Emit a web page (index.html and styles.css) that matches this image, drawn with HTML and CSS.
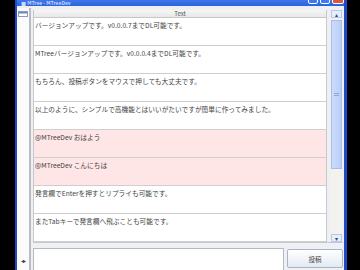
FILE: index.html
```html
<!DOCTYPE html>
<html>
  <head>
    <meta charset="UTF-8" />
    <title>MTree - MTreeDev</title>
    <link rel="stylesheet" href="styles.css">
  </head>
  <body>
    <div class="window">
      <div class="titlebar">
        <span class="title-text">■ MTree - MTreeDev</span>
        <div class="title-buttons">
          <span class="tb tb-min"></span>
          <span class="tb tb-max"></span>
          <span class="tb tb-close"></span>
        </div>
      </div>

      <div class="window-body">
        <div class="side">
          <svg class="side-icon" viewBox="0 0 10 6" width="10" height="6">
            <rect x="0.5" y="0.5" width="9" height="5" fill="#fff" stroke="#8a9ab8" />
            <rect x="1" y="1" width="8" height="1.5" fill="#6c86c0" />
          </svg>
          <span class="side-arrows">◂▸</span>
        </div>

        <div class="main">
          <div class="table-area">
            <div class="table">
              <div class="table-head">Text</div>
              <div class="row">バージョンアップです。v0.0.0.7までDL可能です。</div>
              <div class="row">MTreeバージョンアップです。v0.0.0.4までDL可能です。</div>
              <div class="row">もちろん、投稿ボタンをマウスで押しても大丈夫です。</div>
              <div class="row">以上のように、シンプルで高機能とはいいがたいですが簡単に作ってみました。</div>
              <div class="row reply">@MTreeDev おはよう</div>
              <div class="row reply">@MTreeDev こんにちは</div>
              <div class="row">発言欄でEnterを押すとリプライも可能です。</div>
              <div class="row">またTabキーで発言欄へ飛ぶことも可能です。</div>
            </div>
            <div class="scrollbar">
              <span class="sb-btn">▴</span>
              <div class="sb-track">
                <div class="sb-thumb"><span class="grip"></span></div>
              </div>
              <span class="sb-btn">▾</span>
            </div>
          </div>

          <div class="input-row">
            <input type="text" class="post-input" />
            <button class="post-button">投稿</button>
          </div>
        </div>
      </div>
    </div>
  </body>
</html>
```

FILE: styles.css
```css
:root {
  --xp-blue: #2a5fdc;
  --xp-blue-dark: #1f4cc4;
  --frame-bg: #eef0f3;
  --row-line: #cfcfcf;
  --reply-bg: #ffe6e6;
  --text: #3c3c3c;
}

* {
  margin: 0;
  padding: 0;
  box-sizing: border-box;
}

body {
  width: 360px;
  height: 270px;
  overflow: hidden;
  background-color: #000;
  font-family: "Noto Sans CJK JP", "Liberation Sans", sans-serif;
  color: var(--text);
  padding-left: 15px;
}

.window {
  width: 332px;
  height: 270px;
  display: flex;
  flex-direction: column;
  border-left: 2px solid var(--xp-blue-dark);
  border-right: 3px solid var(--xp-blue-dark);
  background-color: var(--frame-bg);
}

.titlebar {
  height: 6px;
  flex-shrink: 0;
  display: flex;
  justify-content: space-between;
  overflow: hidden;
  background: linear-gradient(#3f78ec, #2b62dd);
}

.title-text {
  font-size: 5px;
  line-height: 6px;
  margin-left: 4px;
  color: #c9d8fb;
  font-weight: bold;
}

.title-buttons {
  display: flex;
  gap: 2px;
  margin-top: -6px;
}

.tb {
  width: 10px;
  height: 10px;
  border: 1px solid #fff;
  border-radius: 2px;
  background-color: #3c7af2;
}

.tb-close {
  width: 12px;
  background-color: #e0583a;
}

.window-body {
  flex: 1;
  display: flex;
  min-height: 0;
}

.side {
  width: 14px;
  flex-shrink: 0;
  margin-top: 2px;
  background-color: #fbfbfb;
  border-right: 2px solid #b9bcc2;
  display: flex;
  flex-direction: column;
  justify-content: space-between;
  align-items: center;
  padding: 2px 0 6px;
}

.side-icon {
  display: block;
  margin-top: 1px;
}

.side-arrows {
  font-size: 6px;
  line-height: 6px;
  color: #444;
  letter-spacing: -1px;
}

.main {
  flex: 1;
  display: flex;
  flex-direction: column;
  padding: 4px 1px 0 2px;
  min-width: 0;
}

.table-area {
  display: flex;
  gap: 4px;
  height: 232px;
  flex-shrink: 0;
  border-left: 1px solid #c4c7cc;
}

.table {
  flex: 1;
  background-color: #fff;
  border-right: 1px solid #c9c9c9;
  overflow: hidden;
}

.table-head {
  height: 8px;
  font-size: 6px;
  line-height: 8px;
  text-align: center;
  color: #555;
  background: linear-gradient(#f6f6f6, #e8e8e8);
  border-bottom: 1px solid #c8c8c8;
}

.row {
  height: 28px;
  font-size: 6.7px;
  line-height: 8px;
  padding: 3px 1px 0;
  white-space: nowrap;
  color: #444;
  border-bottom: 1px solid var(--row-line);
}

.row.reply {
  background-color: var(--reply-bg);
}

.scrollbar {
  width: 11px;
  flex-shrink: 0;
  display: flex;
  flex-direction: column;
  background-color: #f3f2ee;
  margin-right: 1px;
}

.sb-btn {
  height: 8px;
  font-size: 6px;
  line-height: 8px;
  text-align: center;
  color: #3a4a78;
  background-color: #e6eefc;
  border: 1px solid #b8c8ec;
}

.sb-track {
  flex: 1;
  padding-top: 2px;
}

.sb-thumb {
  height: 149px;
  background: linear-gradient(90deg, #cddcfb, #b9cdf6);
  border: 1px solid #a8bde8;
  display: flex;
  align-items: center;
  justify-content: center;
}

.grip {
  width: 5px;
  height: 3px;
  border-top: 1px solid #8ea6d8;
  border-bottom: 1px solid #8ea6d8;
}

.input-row {
  flex: 1;
  display: flex;
  gap: 3px;
  padding-top: 5px;
  border-top: 1px solid #c4c7cc;
}

.post-input {
  flex: 1;
  border: 1px solid #b6b9be;
  border-bottom: none;
  background-color: #fff;
  min-width: 0;
}

.post-button {
  width: 56px;
  height: 19px;
  margin-top: 1px;
  font-family: "Noto Sans CJK JP", sans-serif;
  font-size: 6.5px;
  color: #444;
  border: 1px solid #a9b4c8;
  border-radius: 2px;
  background: linear-gradient(#ffffff, #e4e9f2);
}
```
